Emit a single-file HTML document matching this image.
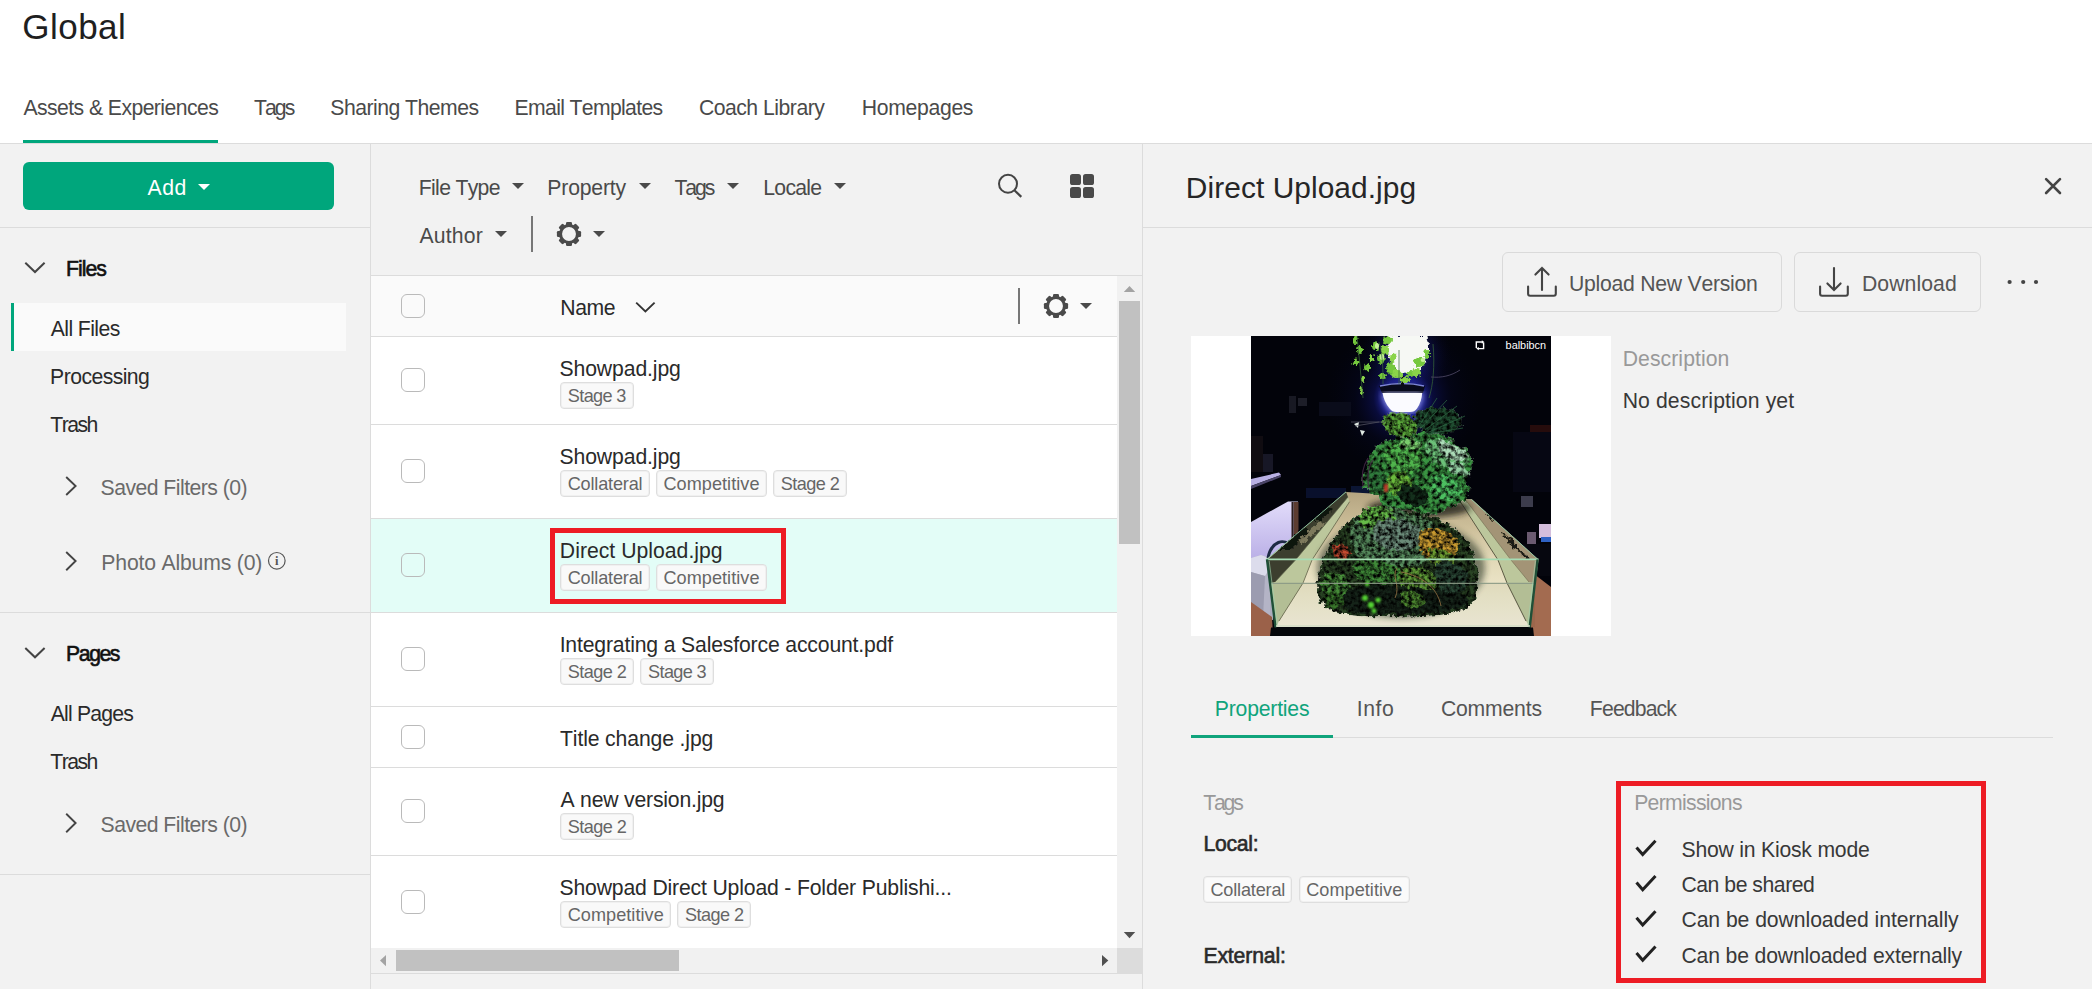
<!DOCTYPE html>
<html lang="en">
<head>
<meta charset="utf-8">
<title>Global - Assets &amp; Experiences</title>
<style>
html,body,h1,h2{margin:0;padding:0}
h1,h2{font-weight:normal}
body{width:2092px;height:989px;overflow:hidden;position:relative;background:#fff;
 font-family:"Liberation Sans",sans-serif;font-kerning:none;color:#222}
.a,.t,.tag,svg.i{position:absolute}
.t{white-space:pre;line-height:1;display:block}
.tag{box-sizing:content-box;border:1px solid #dedede;border-radius:4px;display:block;box-shadow:inset 0 0 0 1px rgba(0,0,0,.035)}
.ln{position:absolute;background:#dcdcdc}
.cb{position:absolute;left:401px;width:21.5px;height:21.5px;border:1px solid #bababa;border-radius:6px}
.caret{position:absolute;width:0;height:0;border-left:6px solid transparent;border-right:6px solid transparent;border-top:6px solid #4a4a4a}
.row{position:absolute;left:371px;width:746px;background:#fff;border-bottom:1px solid #dcdcdc}
.btn{position:absolute;top:252px;height:57.5px;border:1px solid #dadada;border-radius:6px}
.hl{position:absolute;border:5px solid #ed1c24;box-sizing:border-box}
</style>
</head>
<body>

<!-- panels background -->
<div class="a" style="left:0;top:144px;width:2092px;height:845px;background:#f2f2f2"></div>
<div class="ln" style="left:0;top:143px;width:2092px;height:1px"></div>
<div class="ln" style="left:370px;top:144px;width:1px;height:845px"></div>
<div class="ln" style="left:1142px;top:144px;width:1px;height:845px"></div>


<header>
<div class="a" style="left:23px;top:140px;width:195px;height:3px;background:#00a67c"></div>
<h1 class="t" style="left:22.24px;top:8.75px;font-size:35px;letter-spacing:0.486px;color:#1f1f1f">Global</h1>
<span class="t" style="left:23.46px;top:97.00px;font-size:21.2px;letter-spacing:-0.568px;color:#4a4a4a">Assets &amp; Experiences</span>
<span class="t" style="left:254.02px;top:97.00px;font-size:21.2px;letter-spacing:-1.956px;color:#4a4a4a">Tags</span>
<span class="t" style="left:330.29px;top:97.00px;font-size:21.2px;letter-spacing:-0.517px;color:#4a4a4a">Sharing Themes</span>
<span class="t" style="left:514.56px;top:97.00px;font-size:21.2px;letter-spacing:-0.655px;color:#4a4a4a">Email Templates</span>
<span class="t" style="left:698.92px;top:97.00px;font-size:21.2px;letter-spacing:-0.499px;color:#4a4a4a">Coach Library</span>
<span class="t" style="left:861.66px;top:97.00px;font-size:21.2px;letter-spacing:-0.306px;color:#4a4a4a">Homepages</span>
</header>

<!-- ============ sidebar ============ -->
<aside>
<div class="a" style="left:23px;top:162px;width:311px;height:48px;border-radius:6px;background:#00a67c"></div>
<div class="caret" style="left:198px;top:184px;border-top-color:#fff"></div>
<div class="ln" style="left:0;top:227px;width:370px;height:1px"></div>
<svg class="i" style="left:20px;top:258px" width="30" height="20" viewBox="20 258 30 20"><path d="M25.3 262.7 L35 272 L44.6 262.7" fill="none" stroke="#444" stroke-width="2"/></svg>
<div class="a" style="left:11px;top:303px;width:335px;height:47.5px;background:#fafafa"></div>
<div class="a" style="left:11px;top:303px;width:3px;height:47.5px;background:#00a67c"></div>
<svg class="i" style="left:60px;top:470px" width="24" height="32" viewBox="60 470 24 32"><path d="M66.2 477 L75.6 486 L66.2 495" fill="none" stroke="#444" stroke-width="1.9"/></svg>
<svg class="i" style="left:60px;top:545px" width="24" height="32" viewBox="60 545 24 32"><path d="M66.2 552 L75.6 561 L66.2 570.2" fill="none" stroke="#444" stroke-width="1.9"/></svg>
<svg class="i" style="left:264px;top:548px" width="26" height="26" viewBox="264 548 26 26"><circle cx="276.8" cy="560.8" r="8.3" fill="none" stroke="#555" stroke-width="1.2"/><text x="276.8" y="565.2" text-anchor="middle" font-family="Liberation Serif, serif" font-weight="bold" font-size="12.5" fill="#555">i</text></svg>
<div class="ln" style="left:0;top:612px;width:370px;height:1px"></div>
<svg class="i" style="left:20px;top:643px" width="30" height="20" viewBox="20 643 30 20"><path d="M25.3 648 L35 657.3 L44.6 648" fill="none" stroke="#444" stroke-width="2"/></svg>
<svg class="i" style="left:60px;top:807px" width="24" height="32" viewBox="60 807 24 32"><path d="M66.2 813.8 L75.6 823 L66.2 832.2" fill="none" stroke="#444" stroke-width="1.9"/></svg>
<div class="ln" style="left:0;top:874px;width:370px;height:1px"></div>
<span class="t" style="left:147.46px;top:177.00px;font-size:21.2px;letter-spacing:0.602px;color:#fff">Add</span>
<span class="t" style="left:66.06px;top:258.10px;font-size:21.2px;letter-spacing:-0.982px;color:#111;-webkit-text-stroke:0.6px #111">Files</span>
<span class="t" style="left:50.71px;top:317.75px;font-size:21.2px;letter-spacing:-0.577px;color:#2a2a2a">All Files</span>
<span class="t" style="left:50.11px;top:365.75px;font-size:21.2px;letter-spacing:-0.562px;color:#2a2a2a">Processing</span>
<span class="t" style="left:50.27px;top:413.75px;font-size:21.2px;letter-spacing:-1.517px;color:#2a2a2a">Trash</span>
<span class="t" style="left:100.54px;top:477.00px;font-size:21.2px;letter-spacing:-0.525px;color:#6a6a6a">Saved Filters (0)</span>
<span class="t" style="left:101.36px;top:552.00px;font-size:21.2px;letter-spacing:-0.182px;color:#6a6a6a">Photo Albums (0)</span>
<span class="t" style="left:66.06px;top:643.40px;font-size:21.2px;letter-spacing:-1.418px;color:#111;-webkit-text-stroke:0.6px #111">Pages</span>
<span class="t" style="left:50.71px;top:702.75px;font-size:21.2px;letter-spacing:-0.807px;color:#2a2a2a">All Pages</span>
<span class="t" style="left:50.27px;top:750.75px;font-size:21.2px;letter-spacing:-1.517px;color:#2a2a2a">Trash</span>
<span class="t" style="left:100.54px;top:814.00px;font-size:21.2px;letter-spacing:-0.525px;color:#6a6a6a">Saved Filters (0)</span>
</aside>

<!-- ============ file list ============ -->
<main>
<!-- filter bar -->
<div class="caret" style="left:512px;top:183px"></div>
<div class="caret" style="left:639px;top:183px"></div>
<div class="caret" style="left:727px;top:183px"></div>
<div class="caret" style="left:834px;top:183px"></div>
<div class="caret" style="left:495px;top:231px"></div>
<div class="a" style="left:531px;top:216px;width:2px;height:36px;background:#777"></div>
<svg class="i" style="left:555px;top:220px" width="28" height="28" viewBox="-14 -14 28 28"><g fill="#4a4a4a"><circle r="8.5" fill="none" stroke="#4a4a4a" stroke-width="3.1"/><rect x="-3" y="-12.1" width="6" height="4.2" rx="1.3"/><rect x="-3" y="-12.1" width="6" height="4.2" rx="1.3" transform="rotate(45)"/><rect x="-3" y="-12.1" width="6" height="4.2" rx="1.3" transform="rotate(90)"/><rect x="-3" y="-12.1" width="6" height="4.2" rx="1.3" transform="rotate(135)"/><rect x="-3" y="-12.1" width="6" height="4.2" rx="1.3" transform="rotate(180)"/><rect x="-3" y="-12.1" width="6" height="4.2" rx="1.3" transform="rotate(225)"/><rect x="-3" y="-12.1" width="6" height="4.2" rx="1.3" transform="rotate(270)"/><rect x="-3" y="-12.1" width="6" height="4.2" rx="1.3" transform="rotate(315)"/></g></svg>
<div class="caret" style="left:593px;top:231px"></div>
<svg class="i" style="left:994px;top:170px" width="32" height="32" viewBox="994 170 32 32"><circle cx="1008" cy="183.8" r="9" fill="none" stroke="#444" stroke-width="2"/><path d="M1014.4 190.3 L1021.3 196.9" stroke="#444" stroke-width="2.2" fill="none"/></svg>
<svg class="i" style="left:1070px;top:174px" width="24" height="24" viewBox="0 0 24 24"><g fill="#4a4a4a"><rect x="0" y="0" width="11" height="11" rx="2.6"/><rect x="13" y="0" width="11" height="11" rx="2.6"/><rect x="0" y="13" width="11" height="11" rx="2.6"/><rect x="13" y="13" width="11" height="11" rx="2.6"/></g></svg>
<div class="ln" style="left:371px;top:275px;width:771px;height:1px"></div>

<!-- table header -->
<div class="row" style="top:276px;height:60px;background:#fafafa"></div>
<div class="cb" style="top:294px"></div>
<svg class="i" style="left:630px;top:296px" width="30" height="22" viewBox="630 296 30 22"><path d="M636.2 302.6 L645.4 311.4 L654.6 302.6" fill="none" stroke="#333" stroke-width="1.9"/></svg>
<div class="a" style="left:1018px;top:288px;width:2px;height:36px;background:#777"></div>
<svg class="i" style="left:1042px;top:292px" width="28" height="28" viewBox="-14 -14 28 28"><g fill="#4a4a4a"><circle r="8.5" fill="none" stroke="#4a4a4a" stroke-width="3.1"/><rect x="-3" y="-12.1" width="6" height="4.2" rx="1.3"/><rect x="-3" y="-12.1" width="6" height="4.2" rx="1.3" transform="rotate(45)"/><rect x="-3" y="-12.1" width="6" height="4.2" rx="1.3" transform="rotate(90)"/><rect x="-3" y="-12.1" width="6" height="4.2" rx="1.3" transform="rotate(135)"/><rect x="-3" y="-12.1" width="6" height="4.2" rx="1.3" transform="rotate(180)"/><rect x="-3" y="-12.1" width="6" height="4.2" rx="1.3" transform="rotate(225)"/><rect x="-3" y="-12.1" width="6" height="4.2" rx="1.3" transform="rotate(270)"/><rect x="-3" y="-12.1" width="6" height="4.2" rx="1.3" transform="rotate(315)"/></g></svg>
<div class="caret" style="left:1080px;top:303px"></div>

<!-- rows -->
<div class="row" style="top:337px;height:87px"></div>
<div class="row" style="top:425px;height:93px"></div>
<div class="row" style="top:519px;height:93px;background:#e3fdf7"></div>
<div class="row" style="top:613px;height:93px"></div>
<div class="row" style="top:707px;height:60px"></div>
<div class="row" style="top:768px;height:87px"></div>
<div class="row" style="top:856px;height:92px;border-bottom:0"></div>
<div class="cb" style="top:368px"></div>
<div class="cb" style="top:459px"></div>
<div class="cb" style="top:553px"></div>
<div class="cb" style="top:647px"></div>
<div class="cb" style="top:725px"></div>
<div class="cb" style="top:799px"></div>
<div class="cb" style="top:890px"></div>
<div class="hl" style="left:550px;top:528px;width:236px;height:76px"></div>

<!-- scrollbars -->
<div class="a" style="left:1117px;top:276px;width:25px;height:672px;background:#f1f1f1"></div>
<div class="a" style="left:1119px;top:301px;width:21px;height:243px;background:#c1c1c1"></div>
<svg class="i" style="left:1117px;top:276px" width="25" height="25" viewBox="0 0 25 25"><path d="M6.8 16 L12.5 10 L18.2 16 Z" fill="#a3a3a3"/></svg>
<svg class="i" style="left:1117px;top:923px" width="25" height="25" viewBox="0 0 25 25"><path d="M6.8 9 L12.5 15.2 L18.2 9 Z" fill="#505050"/></svg>
<div class="a" style="left:371px;top:948px;width:746px;height:25px;background:#f1f1f1"></div>
<div class="a" style="left:396px;top:950px;width:283px;height:21px;background:#c1c1c1"></div>
<svg class="i" style="left:371px;top:948px" width="25" height="25" viewBox="0 0 25 25"><path d="M15 7 L9 12.6 L15 18.2 Z" fill="#a3a3a3"/></svg>
<svg class="i" style="left:1092px;top:948px" width="25" height="25" viewBox="0 0 25 25"><path d="M10 7 L16.3 12.6 L10 18.2 Z" fill="#505050"/></svg>
<div class="a" style="left:1117px;top:948px;width:25px;height:25px;background:#dcdcdc"></div>
<div class="ln" style="left:371px;top:973px;width:771px;height:1px"></div>
<span class="t" style="left:418.86px;top:176.50px;font-size:21.2px;letter-spacing:-0.695px;color:#4a4a4a">File Type</span>
<span class="t" style="left:547.36px;top:176.50px;font-size:21.2px;letter-spacing:-0.200px;color:#4a4a4a">Property</span>
<span class="t" style="left:674.52px;top:176.50px;font-size:21.2px;letter-spacing:-2.122px;color:#4a4a4a">Tags</span>
<span class="t" style="left:763.36px;top:176.50px;font-size:21.2px;letter-spacing:-0.771px;color:#4a4a4a">Locale</span>
<span class="t" style="left:419.46px;top:224.50px;font-size:21.2px;letter-spacing:0.191px;color:#4a4a4a">Author</span>
<span class="t" style="left:560.36px;top:297.00px;font-size:21.2px;letter-spacing:-0.483px;color:#2a2a2a">Name</span>
<span class="t" style="left:559.54px;top:357.75px;font-size:21.2px;letter-spacing:-0.119px;color:#2a2a2a">Showpad.jpg</span>
<span class="t" style="left:559.54px;top:445.75px;font-size:21.2px;letter-spacing:-0.119px;color:#2a2a2a">Showpad.jpg</span>
<span class="t" style="left:559.86px;top:540.00px;font-size:21.2px;letter-spacing:0.014px;color:#2a2a2a">Direct Upload.jpg</span>
<span class="t" style="left:559.64px;top:633.75px;font-size:21.2px;letter-spacing:-0.161px;color:#2a2a2a">Integrating a Salesforce account.pdf</span>
<span class="t" style="left:560.02px;top:728.25px;font-size:21.2px;letter-spacing:-0.134px;color:#2a2a2a">Title change .jpg</span>
<span class="t" style="left:560.46px;top:789.00px;font-size:21.2px;letter-spacing:-0.192px;color:#2a2a2a">A new version.jpg</span>
<span class="t" style="left:559.54px;top:876.50px;font-size:21.2px;letter-spacing:-0.167px;color:#2a2a2a">Showpad Direct Upload - Folder Publishi...</span>
<span class="tag" style="left:560.00px;top:382.00px;width:71.75px;height:24.50px;background:#f9f9f9"><span class="t" style="left:6.78px;top:3.75px;font-size:18.1px;letter-spacing:-0.618px;color:#666">Stage 3</span></span>
<span class="tag" style="left:560.00px;top:470.00px;width:87.50px;height:24.50px;background:#f9f9f9"><span class="t" style="left:6.68px;top:3.75px;font-size:18.1px;letter-spacing:-0.168px;color:#666">Collateral</span></span>
<span class="tag" style="left:656.00px;top:470.00px;width:108.75px;height:24.50px;background:#f9f9f9"><span class="t" style="left:6.43px;top:3.75px;font-size:18.1px;letter-spacing:0.049px;color:#666">Competitive</span></span>
<span class="tag" style="left:773.00px;top:470.00px;width:72.00px;height:24.50px;background:#f9f9f9"><span class="t" style="left:6.78px;top:3.75px;font-size:18.1px;letter-spacing:-0.557px;color:#666">Stage 2</span></span>
<span class="tag" style="left:560.00px;top:564.00px;width:87.50px;height:24.50px;background:#f9f9f9"><span class="t" style="left:6.68px;top:3.75px;font-size:18.1px;letter-spacing:-0.168px;color:#666">Collateral</span></span>
<span class="tag" style="left:656.00px;top:564.00px;width:108.75px;height:24.50px;background:#f9f9f9"><span class="t" style="left:6.43px;top:3.75px;font-size:18.1px;letter-spacing:0.049px;color:#666">Competitive</span></span>
<span class="tag" style="left:560.00px;top:658.00px;width:72.00px;height:24.75px;background:#f9f9f9"><span class="t" style="left:6.78px;top:4.00px;font-size:18.1px;letter-spacing:-0.557px;color:#666">Stage 2</span></span>
<span class="tag" style="left:640.00px;top:658.00px;width:72.00px;height:24.75px;background:#f9f9f9"><span class="t" style="left:7.03px;top:4.00px;font-size:18.1px;letter-spacing:-0.618px;color:#666">Stage 3</span></span>
<span class="tag" style="left:560.00px;top:813.00px;width:72.00px;height:24.75px;background:#f9f9f9"><span class="t" style="left:6.78px;top:4.00px;font-size:18.1px;letter-spacing:-0.557px;color:#666">Stage 2</span></span>
<span class="tag" style="left:560.00px;top:901.00px;width:109.00px;height:24.50px;background:#f9f9f9"><span class="t" style="left:6.68px;top:3.75px;font-size:18.1px;letter-spacing:0.049px;color:#666">Competitive</span></span>
<span class="tag" style="left:677.00px;top:901.00px;width:72.25px;height:24.50px;background:#f9f9f9"><span class="t" style="left:7.03px;top:3.75px;font-size:18.1px;letter-spacing:-0.557px;color:#666">Stage 2</span></span>
</main>

<!-- ============ detail panel ============ -->
<section>
<svg class="i" style="left:2040px;top:173px" width="26" height="26" viewBox="2040 173 26 26"><path d="M2046.1 179.1 L2060 193 M2060 179.1 L2046.1 193" stroke="#444" stroke-width="2.6" stroke-linecap="round" fill="none"/></svg>
<div class="ln" style="left:1143px;top:227px;width:949px;height:1px"></div>
<div class="btn" style="left:1502px;width:278px"></div>
<div class="btn" style="left:1794px;width:185px"></div>
<svg class="i" style="left:1522px;top:262px" width="40" height="40" viewBox="1522 262 40 40"><path d="M1528.1 286.5 V293.7 Q1528.1 295.7 1530.1 295.7 H1553.8 Q1555.8 295.7 1555.8 293.7 V286.5 M1542 290 V268 M1535.4 274.6 L1542 268 L1548.6 274.6" fill="none" stroke="#444" stroke-width="2.1" stroke-linecap="round" stroke-linejoin="miter"/></svg>
<svg class="i" style="left:1814px;top:262px" width="40" height="40" viewBox="1814 262 40 40"><path d="M1820.1 286.5 V293.7 Q1820.1 295.7 1822.1 295.7 H1845.8 Q1847.8 295.7 1847.8 293.7 V286.5 M1834 268 V289.6 M1827.4 283.4 L1834 290 L1840.6 283.4" fill="none" stroke="#444" stroke-width="2.1" stroke-linecap="round" stroke-linejoin="miter"/></svg>
<svg class="i" style="left:2004px;top:276px" width="40" height="12" viewBox="2004 276 40 12"><g fill="#444"><circle cx="2009.6" cy="282" r="2.1"/><circle cx="2023.2" cy="282" r="2.1"/><circle cx="2036" cy="282" r="2.1"/></g></svg>

<div class="a" style="left:1191px;top:336px;width:420px;height:300px;background:#fff"></div>
<svg class="i" style="left:1251px;top:336px" width="300" height="300" viewBox="0 0 300 300">
<defs>
<radialGradient id="glow" cx="152" cy="62" r="78" gradientUnits="userSpaceOnUse">
<stop offset="0" stop-color="#5a64ff" stop-opacity=".9"/><stop offset=".26" stop-color="#2a30c8" stop-opacity=".7"/><stop offset=".38" stop-color="#10146a" stop-opacity=".5"/><stop offset=".62" stop-color="#070932" stop-opacity=".28"/><stop offset="1" stop-color="#03041a" stop-opacity="0"/>
</radialGradient>
<radialGradient id="glow2" cx="156" cy="18" r="45" gradientUnits="userSpaceOnUse">
<stop offset="0" stop-color="#8890ff" stop-opacity=".8"/><stop offset=".5" stop-color="#181c80" stop-opacity=".4"/><stop offset="1" stop-color="#04051a" stop-opacity="0"/>
</radialGradient>
<linearGradient id="sand" x1="0" y1="158" x2="0" y2="292" gradientUnits="userSpaceOnUse">
<stop offset="0" stop-color="#b6a682"/><stop offset=".25" stop-color="#cdbf9a"/><stop offset=".5" stop-color="#e2d9b8"/><stop offset=".75" stop-color="#eee8cc"/><stop offset="1" stop-color="#f5f0dc"/>
</linearGradient>
<linearGradient id="cab" x1="0" y1="165" x2="0" y2="225" gradientUnits="userSpaceOnUse">
<stop offset="0" stop-color="#e2dcfa"/><stop offset="1" stop-color="#b9aee6"/>
</linearGradient>
<filter id="fol" x="-5%" y="-5%" width="110%" height="110%" color-interpolation-filters="sRGB">
<feTurbulence type="fractalNoise" baseFrequency=".16" numOctaves="3" seed="7" result="n"/>
<feDisplacementMap in="SourceGraphic" in2="n" scale="9" xChannelSelector="R" yChannelSelector="G" result="d"/>
<feTurbulence type="fractalNoise" baseFrequency=".22" numOctaves="3" seed="11" result="n2"/>
<feColorMatrix in="n2" type="matrix" values="0 2.4 0 0 -.55  0 2.4 0 0 -.55  0 2.4 0 0 -.55  0 0 0 0 1" result="g"/>
<feBlend in="d" in2="g" mode="multiply" result="b"/>
<feComposite in="b" in2="d" operator="in"/>
</filter>
<filter id="fol2" x="-5%" y="-5%" width="110%" height="110%" color-interpolation-filters="sRGB">
<feTurbulence type="fractalNoise" baseFrequency=".2" numOctaves="3" seed="23" result="n"/>
<feDisplacementMap in="SourceGraphic" in2="n" scale="7" xChannelSelector="R" yChannelSelector="G" result="d"/>
<feTurbulence type="fractalNoise" baseFrequency=".26" numOctaves="3" seed="5" result="n2"/>
<feColorMatrix in="n2" type="matrix" values="0 2.4 0 0 -.6  0 2.4 0 0 -.6  0 2.4 0 0 -.6  0 0 0 0 1" result="g"/>
<feBlend in="d" in2="g" mode="multiply" result="b"/>
<feComposite in="b" in2="d" operator="in"/>
</filter>
<filter id="soft"><feGaussianBlur stdDeviation="1.2"/></filter>
<filter id="soft3"><feGaussianBlur stdDeviation="3"/></filter>
<filter id="rag" x="-10%" y="-10%" width="120%" height="120%">
<feTurbulence type="fractalNoise" baseFrequency=".3" numOctaves="2" seed="2" result="n"/>
<feDisplacementMap in="SourceGraphic" in2="n" scale="6" xChannelSelector="R" yChannelSelector="G"/>
</filter>
<clipPath id="pc"><rect width="300" height="300"/></clipPath>
</defs>
<g clip-path="url(#pc)">
<rect width="300" height="300" fill="#02030a"/>
<rect width="300" height="300" fill="url(#glow)"/>
<rect width="300" height="300" fill="url(#glow2)"/>
<!-- faint background objects -->
<g opacity=".9">
<rect x="38" y="60" width="7" height="17" fill="#1b1c26"/><rect x="47" y="62" width="9" height="8" fill="#20212c"/><rect x="68" y="66" width="32" height="14" fill="#0b0d1c"/>
<rect x="0" y="100" width="12" height="36" fill="#120d12"/><rect x="12" y="118" width="10" height="18" fill="#1a1a2a"/>
<rect x="279" y="89" width="21" height="12" fill="#2a0d0d"/><rect x="262" y="96" width="38" height="60" fill="#070814"/>
<rect x="100" y="150" width="22" height="12" fill="#0d1838"/><rect x="55" y="152" width="40" height="10" fill="#0a1230"/>
</g>
<!-- left shelf / cabinet / device -->
<polygon points="0,143 28,136.500 30,139 0,150" fill="#b9b0e4"/>
<polygon points="0,150 30,139 30,141 0,153" fill="#4a4468"/>
<polygon points="0,186 37,165.500 47,165.500 47,206 24,223 0,223" fill="url(#cab)"/>
<rect x="42.500" y="166" width="5" height="52" fill="#5c3c30"/>
<rect x="40.500" y="166" width="2" height="52" fill="#2a1c1c"/>
<polygon points="0,222 10,219 24,223 22,284 0,282" fill="#b4b4c6"/>
<polygon points="0,222 10,219 24,224 14,240 0,236" fill="#dcdcec"/>
<polygon points="0,236 14,240 12,282 0,280" fill="#9c9cb0"/>
<path d="M17 222 C20 206 34 200 40 212" fill="none" stroke="#1e2a44" stroke-width="3"/>
<!-- wood -->
<polygon points="0,266 21,281 22,300 0,300" fill="#9b6149"/>
<polygon points="283,238 300,251 300,300 279,300" fill="#a36b50"/>
<!-- right background items -->
<rect x="288" y="188" width="12" height="14" fill="#d4bedc"/><rect x="290" y="201" width="10" height="5" fill="#2f62c4"/>
<rect x="270" y="160" width="12" height="11" fill="#3c3c4c"/><rect x="276" y="196" width="9" height="12" fill="#6a5a70"/>
<rect x="262" y="208" width="38" height="32" fill="#06070f"/>
<!-- tank interior -->
<polygon points="95,156 220.500,163.600 287,223.400 279,291 25,291 15.600,223.400" fill="url(#sand)"/>
<!-- left wall -->
<polygon points="16,224 95,155.500 98.600,165.700 61,224 52,247 28,285 25,291" fill="#bcc79c"/>
<polygon points="16,224 95,155.500 97,161 44.500,224 24,246 19.500,247" fill="#3c3e2e"/>
<g filter="url(#rag)"><path d="M28 214 L52 192 L60 194 L40 214Z M62 184 L78 170 L82 173 L70 184Z" fill="#11130e"/><path d="M46 206 L70 184 L74 188 L52 208Z" fill="#8d8868" opacity=".8"/></g>
<path d="M98.600 165.700 L61 224 L52 247 L28 285" stroke="#6e6e54" stroke-width=".9" fill="none"/>
<path d="M97 161 L44.500 224 L24 246" stroke="#5a6048" stroke-width=".7" fill="none"/>
<!-- right wall -->
<polygon points="287.500,224 220.800,163.200 208.600,164.500 247,224 256,247 275,285 279,291" fill="#bcc79c"/>
<polygon points="287.500,224 220.800,163.200 214.700,164 260,224 278,246 283.500,247" fill="#a39476"/>
<g filter="url(#rag)"><path d="M250 196 L262 204 L270 216 L262 212Z M234 176 L244 184 L240 186Z M268 214 L280 222 L274 224Z" fill="#1c1a12"/></g>
<path d="M208.600 164.500 L247 224 L256 247 L275 285" stroke="#5c5a44" stroke-width="1" fill="none"/>
<path d="M214.700 164 L260 224 L278 246" stroke="#7a7458" stroke-width=".7" fill="none"/>
<!-- plant shadows on sand -->
<ellipse cx="150" cy="232" rx="84" ry="50" fill="#1e2a1a" opacity=".55" filter="url(#soft3)"/>
<ellipse cx="168" cy="172" rx="52" ry="10" fill="#1a1e14" opacity=".8" filter="url(#soft3)"/>
<!-- upper plant mass -->
<g filter="url(#fol)">
<path d="M150 100 C170 92 196 96 206 108 C224 118 226 132 214 142 C224 156 212 170 196 172 C188 182 166 180 160 172 C146 178 128 172 128 160 C112 158 106 142 116 134 C112 120 128 104 150 100Z" fill="#3a9442"/>
<path d="M136 112 C150 100 170 104 172 118 C176 132 160 140 148 136 C136 134 130 122 136 112Z" fill="#4fb44c"/>
<path d="M176 104 C196 98 216 112 218 126 C214 138 196 134 186 128 C176 122 170 112 176 104Z" fill="#6cc078"/>
<path d="M184 140 C200 136 214 146 210 158 C202 168 186 166 180 156 C178 148 180 142 184 140Z" fill="#4cc060"/>
<path d="M140 136 C152 132 164 140 162 152 C158 162 144 162 138 154 C134 146 136 140 140 136Z" fill="#6aba3c"/>
<path d="M150 150 C160 146 176 150 178 162 C176 172 160 172 152 166 C146 160 146 154 150 150Z" fill="#14301c"/>
<path d="M116 134 C124 128 134 134 134 146 C132 158 122 158 116 150 C112 144 112 138 116 134Z" fill="#2f7a3c"/>
</g>
<g filter="url(#fol)" opacity=".9">
<path d="M186 106 C198 102 214 112 216 122 C210 128 196 124 190 118Z" fill="#b4e0c0"/>
<path d="M196 126 C206 124 220 132 218 140 C208 142 198 136 196 130Z" fill="#9ad4aa"/>
<path d="M150 104 C160 100 170 104 170 112 C162 116 152 112 150 108Z" fill="#7ed070"/>
</g>
<rect x="133" y="148" width="4" height="8" fill="#c23a2a" filter="url(#soft)"/>
<path d="M117 122 C112 130 110 140 112 150 M122 124 C116 132 116 144 118 152" stroke="#4a2a4a" stroke-width="1.200" fill="none" opacity=".8"/>
<!-- lower plants -->
<g filter="url(#fol2)">
<path d="M100 184 C128 168 178 172 202 192 C224 204 230 236 225 262 C216 282 170 281 130 280 C92 282 64 274 66 252 C68 228 80 198 100 184Z" fill="#2a4424"/>
<path d="M108 178 C126 166 150 170 158 180 C176 176 188 190 186 204 C188 222 170 232 150 230 C130 236 104 228 102 210 C96 198 100 186 108 178Z" fill="#568a5c"/>
<path d="M112 174 C124 166 142 170 144 182 C140 194 122 196 112 190 C106 184 108 178 112 174Z" fill="#66bc48"/>
<path d="M126 186 C140 180 164 184 172 196 C176 208 160 216 144 214 C130 214 120 204 122 194Z" fill="#6a8a78"/>
<path d="M170 194 C186 188 206 196 208 212 C206 226 186 228 174 222 C166 214 166 202 170 194Z" fill="#c89a30"/>
<path d="M178 214 C190 210 204 216 204 226 C198 234 184 232 178 226Z" fill="#6a9a30"/>
<path d="M82 210 C90 206 99 209 99 218 C96 225 87 225 83 220Z" fill="#c44a30"/>
<path d="M104 226 C122 220 150 226 152 240 C148 250 122 250 110 244 C102 238 100 230 104 226Z" fill="#3f8a38"/>
<path d="M150 234 C166 228 186 234 188 248 C186 258 164 260 154 254 C146 248 146 240 150 234Z" fill="#5e9a36"/>
<path d="M72 240 C84 232 100 238 100 252 C98 262 80 264 74 258 C68 252 68 244 72 240Z" fill="#48903a"/>
<path d="M100 252 C120 246 150 250 176 254 C200 252 220 256 218 268 C200 280 140 280 104 276 C88 272 90 258 100 252Z" fill="#16241a"/>
<path d="M186 226 C200 222 218 230 218 246 C216 258 198 260 190 254 C184 246 182 234 186 226Z" fill="#2a4836"/>
<path d="M150 256 C160 252 174 256 174 266 C170 274 156 274 150 268Z" fill="#4e8a30"/>
<path d="M74 258 C82 254 92 258 92 266 C88 274 78 274 74 268Z" fill="#3a7a2c"/>
</g>
<g fill="#58dc34" filter="url(#soft)"><circle cx="114" cy="262" r="3"/><circle cx="120" cy="269" r="3.200"/><circle cx="127" cy="264" r="2.600"/><circle cx="123" cy="275" r="2.400"/><circle cx="116" cy="248" r="2.200"/></g>
<path d="M146 232 C140 240 150 250 144 262 M150 236 C170 240 186 250 190 270" stroke="#a07848" stroke-width="1" fill="none" opacity=".8"/>
<!-- water line & glass -->
<rect x="19" y="247" width="265" height="44" fill="#0a2018" opacity=".05"/>
<path d="M19 247.300 H284" stroke="#8b9a86" stroke-width="1.200" opacity=".9"/>
<path d="M15.600 223.400 L95 156 M287 223.400 L220.500 163.600" stroke="#8cc8a4" stroke-width="1" fill="none" opacity=".85"/>
<path d="M15 223.400 H287.600" stroke="#a6dcb4" stroke-width="1.700"/>
<path d="M16 223.400 L24.600 292 M286.600 223.400 L278.600 292" stroke="#1f5038" stroke-width="2.400" fill="none"/>
<path d="M18.200 225 L26.400 290 M284.400 225 L276.800 290" stroke="#9ed4ae" stroke-width=".8" fill="none" opacity=".8"/>
<path d="M25 290 H279" stroke="#d2dcc4" stroke-width="1.400"/>
<polygon points="20,291.500 282,291.500 283,300 19,300" fill="#04070a"/>
<!-- foliage under lamp -->
<g filter="url(#fol2)">
<path d="M132 80 C144 72 160 76 166 86 C172 96 160 104 148 100 C136 100 128 90 132 80Z" fill="#5aa83a"/>
<path d="M166 76 C184 66 206 72 212 86 C208 98 184 100 172 96 C164 90 162 82 166 76Z" fill="#1f4c30"/>
</g>
<g stroke="#2f6a44" stroke-width=".8" fill="none" opacity=".9"><path d="M170 92 L196 64"/><path d="M174 94 L206 70"/><path d="M178 96 L214 80"/><path d="M168 90 L186 62"/><path d="M176 98 L212 92"/></g>
<g fill="#dfe8e2"><path d="M103 88 l5 -2 l-1 6z"/><path d="M109 94 l5 1 l-3 5z"/></g>
<path d="M100 86 H134 M104 90 L128 86" stroke="#5a5a66" stroke-width=".9" opacity=".8"/>
<!-- lamp -->
<path d="M128 50 Q152 44 174 50 L172 57 H131Z" fill="#080a1c"/>
<path d="M129 50 Q152 45 173 50" stroke="#9aa4ff" stroke-width="1.300" fill="none" opacity=".8"/>
<rect x="150" y="40" width="3" height="10" fill="#0a0a14"/>
<path d="M131.500 57 H171.200 Q170.600 66 166 72.500 Q163.500 76 159 76 H145.500 Q141 76 138.600 72.500 Q133 66 131.500 57Z" fill="#c8ccff" filter="url(#soft3)" opacity=".9"/>
<path d="M131.500 57 H171.200 Q170.600 66 166 72.500 Q163.500 76 159 76 H145.500 Q141 76 138.600 72.500 Q133 66 131.500 57Z" fill="#fbfbff"/>
<!-- bright backlight blob and ivy -->
<g filter="url(#rag)">
<path d="M138 0 H176 C180 10 178 22 172 30 C166 40 154 40 146 34 C138 26 134 12 138 0Z" fill="#f6f8f4"/>
</g>
<g fill="#74c83c" filter="url(#rag)">
<ellipse cx="104" cy="4" rx="3" ry="4"/><ellipse cx="109" cy="14" rx="3" ry="4"/><ellipse cx="105" cy="26" rx="2.600" ry="3.600"/><ellipse cx="116" cy="31" rx="3" ry="4.200"/>
<ellipse cx="124" cy="10" rx="3" ry="4"/><ellipse cx="130" cy="22" rx="4" ry="5"/><ellipse cx="136" cy="4" rx="5" ry="4"/><ellipse cx="140" cy="32" rx="5" ry="6"/>
<ellipse cx="168" cy="26" rx="6" ry="5"/><ellipse cx="176" cy="18" rx="3" ry="5"/><ellipse cx="160" cy="38" rx="5" ry="3"/><ellipse cx="132" cy="40" rx="4" ry="3"/>
</g>
<g fill="#8ad44a" filter="url(#rag)"><ellipse cx="120" cy="22" rx="3" ry="4"/><ellipse cx="134" cy="14" rx="4" ry="5"/><ellipse cx="146" cy="38" rx="5" ry="4"/><ellipse cx="154" cy="44" rx="6" ry="3"/><ellipse cx="166" cy="36" rx="5" ry="4"/><ellipse cx="142" cy="22" rx="3" ry="5"/><ellipse cx="112" cy="44" rx="2" ry="3"/><ellipse cx="110" cy="54" rx="2" ry="3"/></g>
<g fill="#c4f098"><ellipse cx="126" cy="10" rx="2" ry="3"/><ellipse cx="131" cy="21" rx="2.400" ry="3"/><ellipse cx="172" cy="24" rx="2.400" ry="2"/></g>
<g stroke="#3a6a3a" stroke-width=".8" fill="none" opacity=".9"><path d="M106 0 C108 20 110 40 112 62"/><path d="M128 6 C132 20 132 34 132 48"/><path d="M148 14 V48"/><path d="M182 8 C184 30 182 50 178 62"/></g>
<path d="M180 41 C190 42 200 40 209 34" stroke="#4a4460" stroke-width=".9" fill="none"/>
<!-- watermark -->
<g fill="none" stroke="#fff" stroke-width="1.400"><path d="M225.300 12 V6 H231.500"/><path d="M232.600 6.500 V12.600 H227"/></g><g fill="#fff"><path d="M230.800 4.300 l2.600 1.700 l-2.600 1.700z"/><path d="M227.800 10.900 l-2.600 1.700 l2.600 1.700z"/></g>
<text x="254.600" y="13" font-family="Liberation Sans, sans-serif" font-size="10.600" fill="#fff" textLength="40.500" lengthAdjust="spacingAndGlyphs">balbibcn</text>
</g>
</svg>


<div class="ln" style="left:1191px;top:737px;width:862px;height:1px"></div>
<div class="a" style="left:1191px;top:734.5px;width:142px;height:3.5px;background:#10a47c"></div>

<div class="hl" style="left:1616px;top:781px;width:370px;height:202px"></div>
<svg class="i" style="left:1630px;top:835px" width="32" height="135" viewBox="1630 835 32 135"><g fill="none" stroke="#222" stroke-width="3"><path d="M1636.5 847.4 L1642.7 854.6 L1655.5 840.8"/><path d="M1636.5 847.4 L1642.7 854.6 L1655.5 840.8" transform="translate(0 35.2)"/><path d="M1636.5 847.4 L1642.7 854.6 L1655.5 840.8" transform="translate(0 70.4)"/><path d="M1636.5 847.4 L1642.7 854.6 L1655.5 840.8" transform="translate(0 105.7)"/></g></svg>
<h2 class="t" style="left:1185.85px;top:173.00px;font-size:29.9px;letter-spacing:0.062px;color:#262626">Direct Upload.jpg</h2>
<span class="t" style="left:1568.96px;top:273.40px;font-size:21.2px;letter-spacing:-0.249px;color:#555">Upload New Version</span>
<span class="t" style="left:1861.96px;top:273.40px;font-size:21.2px;letter-spacing:0.082px;color:#555">Download</span>
<span class="t" style="left:1622.66px;top:348.20px;font-size:21.2px;letter-spacing:0.073px;color:#999">Description</span>
<span class="t" style="left:1622.66px;top:389.60px;font-size:21.2px;letter-spacing:0.112px;color:#383838">No description yet</span>
<span class="t" style="left:1214.86px;top:697.75px;font-size:21.2px;letter-spacing:-0.214px;color:#10a47c">Properties</span>
<span class="t" style="left:1356.64px;top:697.75px;font-size:21.2px;letter-spacing:0.634px;color:#555">Info</span>
<span class="t" style="left:1440.92px;top:697.75px;font-size:21.2px;letter-spacing:-0.192px;color:#555">Comments</span>
<span class="t" style="left:1589.86px;top:697.75px;font-size:21.2px;letter-spacing:-0.851px;color:#555">Feedback</span>
<span class="t" style="left:1203.27px;top:792.00px;font-size:21.2px;letter-spacing:-2.206px;color:#999">Tags</span>
<span class="t" style="left:1203.41px;top:833.25px;font-size:21.2px;letter-spacing:-0.264px;color:#2a2a2a;-webkit-text-stroke:0.6px #2a2a2a">Local:</span>
<span class="t" style="left:1203.41px;top:945.00px;font-size:21.2px;letter-spacing:-0.138px;color:#2a2a2a;-webkit-text-stroke:0.6px #2a2a2a">External:</span>
<span class="t" style="left:1634.16px;top:792.00px;font-size:21.2px;letter-spacing:-0.699px;color:#999">Permissions</span>
<span class="t" style="left:1681.54px;top:839.00px;font-size:21.2px;letter-spacing:-0.221px;color:#383838">Show in Kiosk mode</span>
<span class="t" style="left:1681.42px;top:874.00px;font-size:21.2px;letter-spacing:-0.463px;color:#383838">Can be shared</span>
<span class="t" style="left:1681.42px;top:909.00px;font-size:21.2px;letter-spacing:-0.069px;color:#383838">Can be downloaded internally</span>
<span class="t" style="left:1681.42px;top:945.00px;font-size:21.2px;letter-spacing:-0.157px;color:#383838">Can be downloaded externally</span>
<span class="tag" style="left:1203.00px;top:876.00px;width:87.25px;height:24.75px;background:#fafafa"><span class="t" style="left:6.43px;top:4.00px;font-size:18.1px;letter-spacing:-0.168px;color:#666">Collateral</span></span>
<span class="tag" style="left:1299.00px;top:876.00px;width:108.50px;height:24.75px;background:#fafafa"><span class="t" style="left:6.18px;top:4.00px;font-size:18.1px;letter-spacing:0.049px;color:#666">Competitive</span></span>
</section>

</body>
</html>
